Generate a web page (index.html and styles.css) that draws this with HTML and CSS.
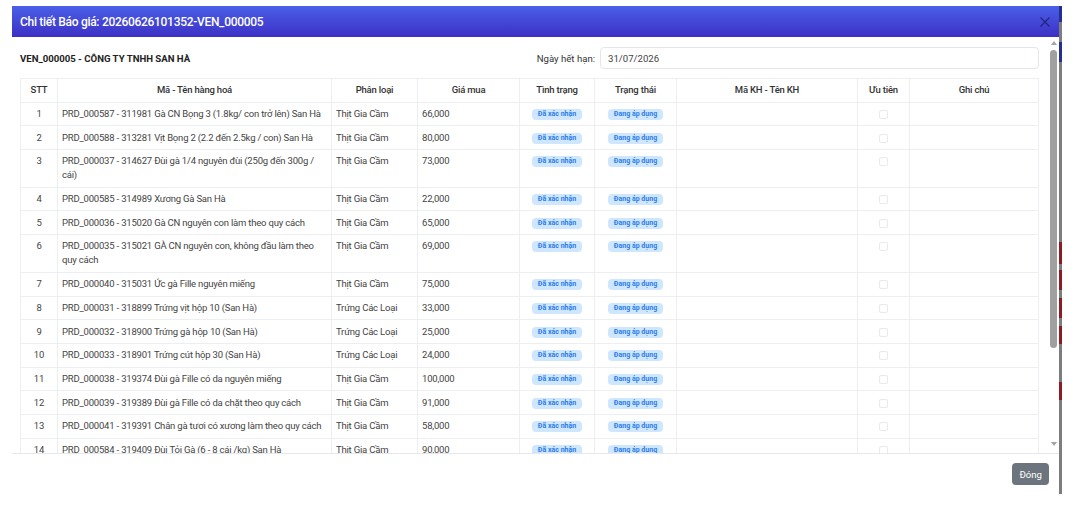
FILE: index.html
```html
<!DOCTYPE html>
<html lang="vi">
<head>
    <meta charset="UTF-8">
    <meta name="viewport" content="width=device-width, initial-scale=1.0">
    <title>Chi tiết Báo giá</title>
    <link rel="stylesheet" href="styles.css">
</head>
<body>

<div class="stage">
    <div class="modal">
        <div class="modal-header">
            <h5 class="modal-title">Chi tiết Báo giá: 20260626101352-VEN_000005</h5>
            <button class="btn-close" aria-label="Close">
                <svg width="10" height="10" viewBox="0 0 10 10">
                    <path d="M0.5 0.5 L9.5 9.5 M9.5 0.5 L0.5 9.5" stroke="currentColor" stroke-width="1.1" fill="none"/>
                </svg>
            </button>
        </div>

        <div class="modal-body">
            <div class="body-content">
                <div class="info-row">
                    <div class="vendor">VEN_000005 - CÔNG TY TNHH SAN HÀ</div>
                    <div class="expiry">
                        <label for="expiry">Ngày hết hạn:</label>
                        <input type="text" id="expiry" value="31/07/2026" readonly>
                    </div>
                </div>

                <table class="quote-table">
                    <colgroup>
                        <col style="width: 37px">
                        <col style="width: 274px">
                        <col style="width: 86px">
                        <col style="width: 102px">
                        <col style="width: 75px">
                        <col style="width: 82px">
                        <col style="width: 181px">
                        <col style="width: 52px">
                        <col style="width: 129px">
                    </colgroup>
                    <thead>
                        <tr>
                            <th>STT</th>
                            <th>Mã - Tên hàng hoá</th>
                            <th>Phân loại</th>
                            <th>Giá mua</th>
                            <th>Tình trạng</th>
                            <th>Trạng thái</th>
                            <th>Mã KH - Tên KH</th>
                            <th>Ưu tiên</th>
                            <th>Ghi chú</th>
                        </tr>
                    </thead>
                    <tbody>
                        <tr>
                            <td class="num">1</td>
                            <td>PRD_000587 - 311981 Gà CN Bọng 3 (1.8kg/ con trở lên) San Hà</td>
                            <td>Thịt Gia Cầm</td>
                            <td>66,000</td>
                            <td class="center"><span class="badge">Đã xác nhận</span></td>
                            <td class="center"><span class="badge">Đang áp dụng</span></td>
                            <td></td>
                            <td class="center"><input type="checkbox" class="check" disabled></td>
                            <td></td>
                        </tr>
                        <tr>
                            <td class="num">2</td>
                            <td>PRD_000588 - 313281 Vịt Bọng 2 (2.2 đến 2.5kg / con) San Hà</td>
                            <td>Thịt Gia Cầm</td>
                            <td>80,000</td>
                            <td class="center"><span class="badge">Đã xác nhận</span></td>
                            <td class="center"><span class="badge">Đang áp dụng</span></td>
                            <td></td>
                            <td class="center"><input type="checkbox" class="check" disabled></td>
                            <td></td>
                        </tr>
                        <tr>
                            <td class="num">3</td>
                            <td>PRD_000037 - 314627 Đùi gà 1/4 nguyên đùi (250g đến 300g / cái)</td>
                            <td>Thịt Gia Cầm</td>
                            <td>73,000</td>
                            <td class="center"><span class="badge">Đã xác nhận</span></td>
                            <td class="center"><span class="badge">Đang áp dụng</span></td>
                            <td></td>
                            <td class="center"><input type="checkbox" class="check" disabled></td>
                            <td></td>
                        </tr>
                        <tr>
                            <td class="num">4</td>
                            <td>PRD_000585 - 314989 Xương Gà San Hà</td>
                            <td>Thịt Gia Cầm</td>
                            <td>22,000</td>
                            <td class="center"><span class="badge">Đã xác nhận</span></td>
                            <td class="center"><span class="badge">Đang áp dụng</span></td>
                            <td></td>
                            <td class="center"><input type="checkbox" class="check" disabled></td>
                            <td></td>
                        </tr>
                        <tr>
                            <td class="num">5</td>
                            <td>PRD_000036 - 315020 Gà CN nguyên con làm theo quy cách</td>
                            <td>Thịt Gia Cầm</td>
                            <td>65,000</td>
                            <td class="center"><span class="badge">Đã xác nhận</span></td>
                            <td class="center"><span class="badge">Đang áp dụng</span></td>
                            <td></td>
                            <td class="center"><input type="checkbox" class="check" disabled></td>
                            <td></td>
                        </tr>
                        <tr>
                            <td class="num">6</td>
                            <td>PRD_000035 - 315021 GÀ CN nguyên con, không đầu làm theo quy cách</td>
                            <td>Thịt Gia Cầm</td>
                            <td>69,000</td>
                            <td class="center"><span class="badge">Đã xác nhận</span></td>
                            <td class="center"><span class="badge">Đang áp dụng</span></td>
                            <td></td>
                            <td class="center"><input type="checkbox" class="check" disabled></td>
                            <td></td>
                        </tr>
                        <tr>
                            <td class="num">7</td>
                            <td>PRD_000040 - 315031 Ức gà Fille nguyên miếng</td>
                            <td>Thịt Gia Cầm</td>
                            <td>75,000</td>
                            <td class="center"><span class="badge">Đã xác nhận</span></td>
                            <td class="center"><span class="badge">Đang áp dụng</span></td>
                            <td></td>
                            <td class="center"><input type="checkbox" class="check" disabled></td>
                            <td></td>
                        </tr>
                        <tr>
                            <td class="num">8</td>
                            <td>PRD_000031 - 318899 Trứng vịt hộp 10 (San Hà)</td>
                            <td>Trứng Các Loại</td>
                            <td>33,000</td>
                            <td class="center"><span class="badge">Đã xác nhận</span></td>
                            <td class="center"><span class="badge">Đang áp dụng</span></td>
                            <td></td>
                            <td class="center"><input type="checkbox" class="check" disabled></td>
                            <td></td>
                        </tr>
                        <tr>
                            <td class="num">9</td>
                            <td>PRD_000032 - 318900 Trứng gà hộp 10 (San Hà)</td>
                            <td>Trứng Các Loại</td>
                            <td>25,000</td>
                            <td class="center"><span class="badge">Đã xác nhận</span></td>
                            <td class="center"><span class="badge">Đang áp dụng</span></td>
                            <td></td>
                            <td class="center"><input type="checkbox" class="check" disabled></td>
                            <td></td>
                        </tr>
                        <tr>
                            <td class="num">10</td>
                            <td>PRD_000033 - 318901 Trứng cút hộp 30 (San Hà)</td>
                            <td>Trứng Các Loại</td>
                            <td>24,000</td>
                            <td class="center"><span class="badge">Đã xác nhận</span></td>
                            <td class="center"><span class="badge">Đang áp dụng</span></td>
                            <td></td>
                            <td class="center"><input type="checkbox" class="check" disabled></td>
                            <td></td>
                        </tr>
                        <tr>
                            <td class="num">11</td>
                            <td>PRD_000038 - 319374 Đùi gà Fille có da nguyên miếng</td>
                            <td>Thịt Gia Cầm</td>
                            <td>100,000</td>
                            <td class="center"><span class="badge">Đã xác nhận</span></td>
                            <td class="center"><span class="badge">Đang áp dụng</span></td>
                            <td></td>
                            <td class="center"><input type="checkbox" class="check" disabled></td>
                            <td></td>
                        </tr>
                        <tr>
                            <td class="num">12</td>
                            <td>PRD_000039 - 319389 Đùi gà Fille có da chặt theo quy cách</td>
                            <td>Thịt Gia Cầm</td>
                            <td>91,000</td>
                            <td class="center"><span class="badge">Đã xác nhận</span></td>
                            <td class="center"><span class="badge">Đang áp dụng</span></td>
                            <td></td>
                            <td class="center"><input type="checkbox" class="check" disabled></td>
                            <td></td>
                        </tr>
                        <tr>
                            <td class="num">13</td>
                            <td>PRD_000041 - 319391 Chân gà tươi có xương làm theo quy cách</td>
                            <td>Thịt Gia Cầm</td>
                            <td>58,000</td>
                            <td class="center"><span class="badge">Đã xác nhận</span></td>
                            <td class="center"><span class="badge">Đang áp dụng</span></td>
                            <td></td>
                            <td class="center"><input type="checkbox" class="check" disabled></td>
                            <td></td>
                        </tr>
                        <tr>
                            <td class="num">14</td>
                            <td>PRD_000584 - 319409 Đùi Tỏi Gà (6 - 8 cái /kg) San Hà</td>
                            <td>Thịt Gia Cầm</td>
                            <td>90,000</td>
                            <td class="center"><span class="badge">Đã xác nhận</span></td>
                            <td class="center"><span class="badge">Đang áp dụng</span></td>
                            <td></td>
                            <td class="center"><input type="checkbox" class="check" disabled></td>
                            <td></td>
                        </tr>
                    </tbody>
                </table>
            </div>

            <div class="scrollbar">
                <span class="arrow-up"></span>
                <span class="thumb"></span>
                <span class="arrow-down"></span>
            </div>
        </div>

        <div class="modal-footer">
            <button class="btn-secondary">Đóng</button>
        </div>
    </div>

    <div class="page-edge"></div>
</div>

</body>
</html>
```

FILE: styles.css
```css
body {
    font-family: Roboto, "Noto Sans", sans-serif;
    background-color: #fff;
    color: #444;
    margin: 0;
}

.stage {
    display: flex;
    align-items: flex-start;
    padding: 6px 0 0 12px;
}

.modal {
    width: 1047px;
    background: #fff;
}

/* header */
.modal-header {
    height: 31px;
    display: flex;
    align-items: center;
    justify-content: space-between;
    padding: 0 9px 0 8px;
    background: linear-gradient(180deg, #4b5fe8 0%, #3c30c5 100%);
}

.modal-title {
    margin: 0;
    color: #fff;
    font-size: 12px;
    font-weight: 500;
    letter-spacing: -0.3px;
}

.btn-close {
    border: none;
    background: none;
    padding: 0;
    width: 10px;
    height: 10px;
    color: rgba(10, 12, 60, 0.6);
    cursor: pointer;
    display: flex;
}

/* body */
.modal-body {
    height: 416px;
    overflow: hidden;
    display: flex;
}

.body-content {
    flex: 1;
    padding: 10px 9px 0 8px;
}

.info-row {
    display: flex;
    justify-content: space-between;
    align-items: center;
    height: 22px;
    margin-bottom: 9px;
}

.vendor {
    font-size: 9.6px;
    font-weight: 700;
    color: #222;
}

.expiry {
    display: flex;
    align-items: center;
    gap: 5px;
}

.expiry label {
    font-size: 9.6px;
    color: #333;
}

.expiry input {
    width: 439px;
    height: 22px;
    box-sizing: border-box;
    border: 1px solid #e3e6ea;
    border-radius: 4px;
    padding: 0 7px;
    font-family: inherit;
    font-size: 9.6px;
    color: #444;
    outline: none;
}

/* table */
.quote-table {
    width: 1018px;
    table-layout: fixed;
    border-collapse: collapse;
    font-size: 9.5px;
    letter-spacing: -0.2px;
}

.quote-table th,
.quote-table td {
    border: 1px solid #eceef1;
    line-height: 14px;
    padding: 4.35px 4px;
    vertical-align: top;
    text-align: left;
}

.quote-table th {
    font-weight: 500;
    color: #333;
    text-align: center;
}

.quote-table td.num,
.quote-table td.center {
    text-align: center;
}

.badge {
    display: inline-block;
    font-size: 7px;
    font-weight: 700;
    line-height: 9px;
    letter-spacing: 0;
    padding: 1px 6px;
    border-radius: 4px;
    background-color: #cfe6ff;
    color: #2b7de9;
    vertical-align: middle;
}

.check {
    appearance: none;
    width: 9px;
    height: 9px;
    margin: 0;
    border: 1px solid #e8eaed;
    border-radius: 2px;
    background: #fff;
    vertical-align: middle;
}

/* scrollbar */
.scrollbar {
    width: 12px;
    display: flex;
    flex-direction: column;
    align-items: center;
    padding-top: 4px;
}

.arrow-up,
.arrow-down {
    width: 0;
    height: 0;
    border-left: 3.5px solid transparent;
    border-right: 3.5px solid transparent;
}

.arrow-up {
    border-bottom: 4px solid #a3a3a3;
}

.arrow-down {
    border-top: 4px solid #a3a3a3;
}

.thumb {
    width: 7px;
    height: 298px;
    margin: 5px 0 94px;
    border-radius: 4px;
    background-color: #a0a0a0;
}

/* footer */
.modal-footer {
    border-top: 1px solid #e6e8eb;
    display: flex;
    justify-content: flex-end;
    padding: 9px 10px 9px 0;
}

.btn-secondary {
    height: 22px;
    padding: 0 7px;
    border: none;
    border-radius: 4px;
    background-color: #6c757d;
    color: #fff;
    font-family: inherit;
    font-size: 9.6px;
    cursor: pointer;
}

.page-edge {
    width: 3px;
    height: 488px;
    background: linear-gradient(180deg,
        #24308f 0, #24308f 16px,
        #7d7d7d 16px, #7d7d7d 36px,
        #24308f 36px, #24308f 56px,
        #7d7d7d 56px, #7d7d7d 236px,
        #8a1c22 236px, #8a1c22 258px,
        #7d7d7d 258px, #7d7d7d 264px,
        #8a1c22 264px, #8a1c22 284px,
        #7d7d7d 284px, #7d7d7d 292px,
        #8a1c22 292px, #8a1c22 312px,
        #7d7d7d 312px, #7d7d7d 320px,
        #8a1c22 320px, #8a1c22 338px,
        #7d7d7d 338px, #7d7d7d 376px,
        #8a1c22 376px, #8a1c22 394px,
        #7d7d7d 394px);
}
```
